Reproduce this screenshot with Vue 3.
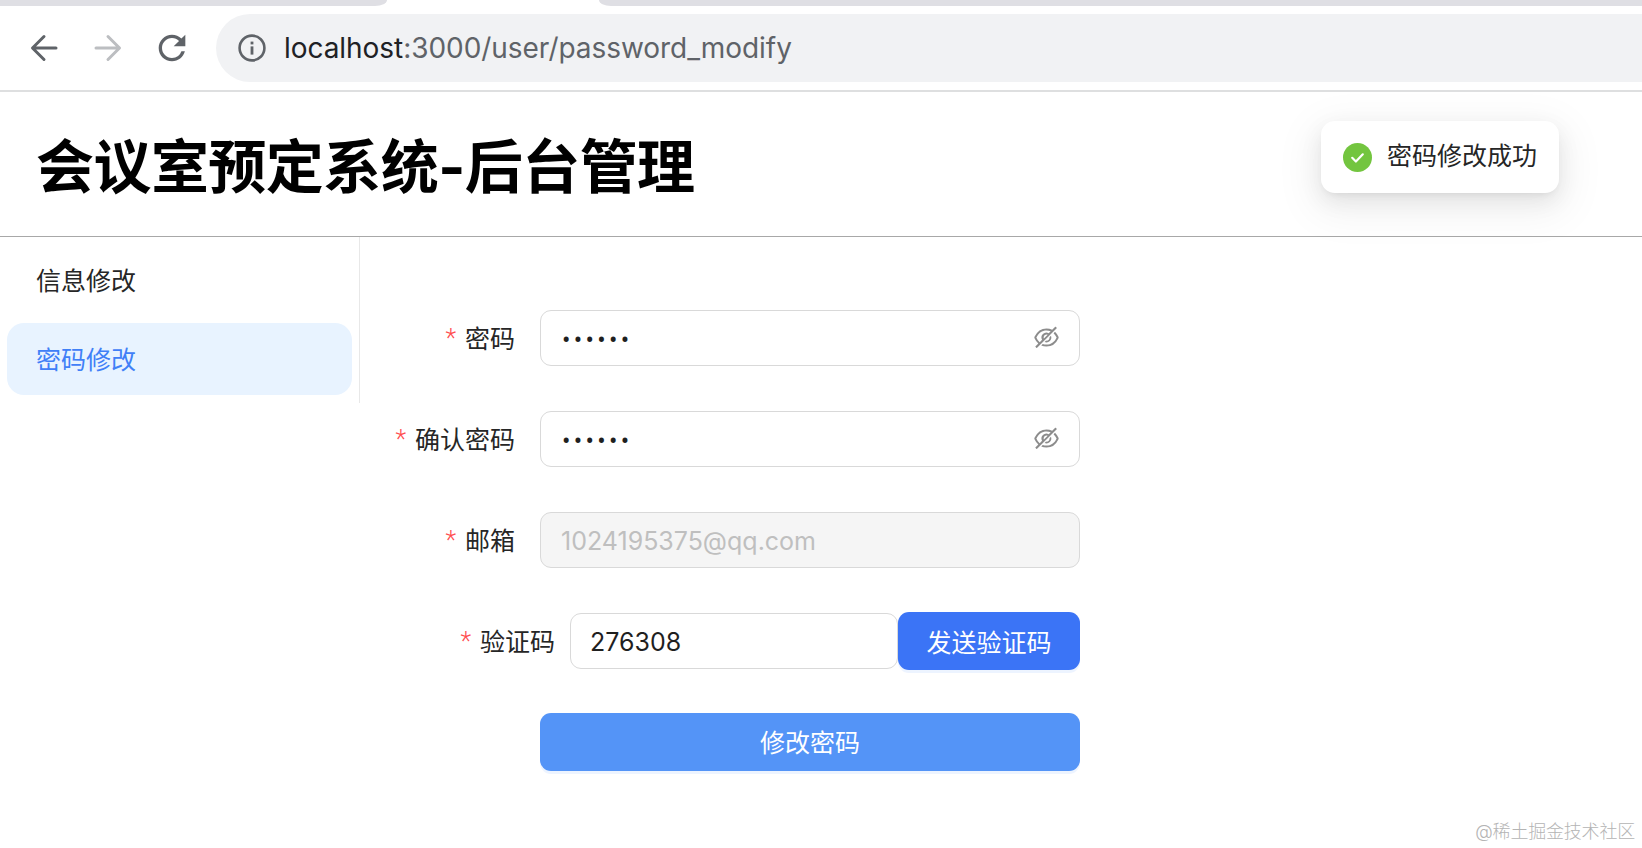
<script setup>
const rows = [
  { label: '密码', value: '123456' },
  { label: '确认密码', value: '123456' },
]
</script>

<template>
  <div class="page">
    <div class="tabstrip">
      <div class="tab-left"></div>
      <div class="tab-gap"></div>
      <div class="tab-right"></div>
    </div>

    <div class="toolbar">
      <svg class="nav-btn" width="28" height="28" viewBox="0 0 28 28" fill="none" stroke="#5f6368" stroke-width="3" stroke-linecap="round" stroke-linejoin="round">
        <path d="M26 14H3M14 2.5 2.5 14 14 25.5" />
      </svg>
      <svg class="nav-btn fwd" width="28" height="28" viewBox="0 0 28 28" fill="none" stroke="#bcbec1" stroke-width="3" stroke-linecap="round" stroke-linejoin="round">
        <path d="M2 14h23M14 2.5 25.5 14 14 25.5" />
      </svg>
      <svg class="reload" width="40" height="40" viewBox="0 0 24 24" fill="#5f6368">
        <path d="M17.65 6.35A7.958 7.958 0 0 0 12 4c-4.42 0-7.99 3.58-7.99 8s3.57 8 7.99 8c3.73 0 6.84-2.55 7.73-6h-2.08A5.99 5.99 0 0 1 12 18c-3.31 0-6-2.69-6-6s2.69-6 6-6c1.66 0 3.14.69 4.22 1.78L13 11h7V4l-2.35 2.35z" />
      </svg>
      <div class="omnibox">
        <svg width="28" height="28" viewBox="0 0 28 28" fill="none">
          <circle cx="14" cy="14" r="12.4" stroke="#5f6368" stroke-width="2.6" />
          <rect x="12.6" y="12.4" width="2.8" height="8.2" fill="#5f6368" />
          <rect x="12.6" y="7.6" width="2.8" height="2.8" fill="#5f6368" />
        </svg>
        <span class="url"><span class="host">localhost</span>:3000/user/password_modify</span>
      </div>
    </div>

    <header class="header">
      <h1 class="title">会议室预定系统-后台管理</h1>
    </header>

    <div class="toast">
      <svg width="29" height="29" viewBox="0 0 29 29">
        <circle cx="14.5" cy="14.5" r="14.5" fill="#73c53f" />
        <path d="M9.2 14.8l3.7 3.7 6.9-7.2" fill="none" stroke="#fff" stroke-width="2.2" stroke-linecap="round" stroke-linejoin="round" />
      </svg>
      <span class="toast-text">密码修改成功</span>
    </div>

    <div class="body">
      <aside class="sidebar">
        <div class="menu-item">信息修改</div>
        <div class="menu-item active">密码修改</div>
      </aside>

      <form class="form" @submit.prevent>
        <div v-for="row in rows" :key="row.label" class="row">
          <label class="label"><i>*</i>{{ row.label }}</label>
          <div class="field">
            <input class="input pw" type="password" :value="row.value" readonly />
            <svg class="eye" width="25" height="25" viewBox="64 64 896 896" fill="#8c8c8c">
              <path d="M942.2 486.2Q889.47 375.11 816.7 305l-50.88 50.88C807.31 395.53 843.45 447.4 874.7 512 791.5 684.2 673.4 766 512 766q-72.67 0-133.87-22.38L323 798.75Q408 838 512 838q288.3 0 430.2-300.3a60.29 60.29 0 0 0 0-51.5zm-63.57-320.64L836 122.88a8 8 0 0 0-11.32 0L715.31 232.2Q624.86 186 512 186q-288.3 0-430.2 300.3a60.3 60.3 0 0 0 0 51.5q56.69 119.4 136.5 191.41L112.48 835a8 8 0 0 0 0 11.31L155.17 889a8 8 0 0 0 11.31 0l712.15-712.12a8 8 0 0 0 0-11.32zM149.3 512C232.6 339.8 350.7 258 512 258c54.54 0 104.13 9.36 149.12 28.39l-70.3 70.3a176 176 0 0 0-238.13 238.13l-83.42 83.42c-46.18-39.79-85.87-91.73-120.27-165.24zm260.71 0a104 104 0 0 1 143.85-96.38L418.78 550.7A103.94 103.94 0 0 1 410 512z" />
              <path d="M508 624c-3.46 0-6.87-.16-10.25-.47l-52.82 52.82a176.09 176.09 0 0 0 227.42-227.42l-52.82 52.82c.31 3.38.47 6.79.47 10.25a111.94 111.94 0 0 1-112 112z" />
            </svg>
          </div>
        </div>

        <div class="row">
          <label class="label"><i>*</i>邮箱</label>
          <div class="field">
            <input class="input disabled" value="1024195375@qq.com" disabled />
          </div>
        </div>

        <div class="row">
          <label class="label wide"><i>*</i>验证码</label>
          <input class="input code" value="276308" readonly />
          <button class="btn send" type="button">发送验证码</button>
        </div>

        <div class="row last">
          <div class="label"></div>
          <button class="btn submit" type="submit">修改密码</button>
        </div>
      </form>
    </div>

    <div class="watermark">@稀土掘金技术社区</div>
  </div>
</template>

<style>
html, body {
  margin: 0;
  background: #fff;
  overflow: hidden;
}
</style>

<style scoped>
.page {
  position: relative;
  width: 1642px;
  height: 848px;
  overflow: hidden;
  background: #fff;
  font-family: Inter, "Noto Sans CJK SC", sans-serif;
  color: #1f1f1f;
}
.tabstrip {
  display: flex;
  height: 6px;
}
.tab-left {
  width: 387px;
  background: #dfdfe4;
  border-bottom-right-radius: 12px 6px;
}
.tab-gap {
  width: 212px;
}
.tab-right {
  flex: 1;
  background: #dfdfe4;
  border-bottom-left-radius: 12px 6px;
}
.toolbar {
  display: flex;
  align-items: center;
  height: 84px;
  border-bottom: 2px solid #dedfe0;
  padding-left: 30px;
  box-sizing: content-box;
}
.nav-btn {
  flex: none;
}
.fwd {
  margin-left: 36px;
}
.reload {
  flex: none;
  margin-left: 30px;
  margin-right: 24px;
}
.omnibox {
  flex: 1;
  height: 68px;
  margin-right: -40px;
  border-radius: 34px;
  background: #f1f2f4;
  display: flex;
  align-items: center;
  padding-left: 22px;
  gap: 18px;
}
.url {
  font-size: 28px;
  color: #5f6368;
  line-height: 34px;
  letter-spacing: -0.05px;
}
.host {
  color: #202124;
}
.header {
  height: 144px;
  display: flex;
  align-items: center;
  border-bottom: 1px solid #a8a8a8;
  padding-left: 36px;
  box-sizing: content-box;
}
.title {
  margin: 6px 0 0;
  font-size: 58px;
  line-height: 70px;
  font-weight: 700;
  color: #000;
  letter-spacing: -0.55px;
}
.toast {
  position: absolute;
  left: 1321px;
  top: 121px;
  width: 238px;
  height: 72px;
  box-sizing: border-box;
  padding-left: 22px;
  display: flex;
  align-items: center;
  gap: 15px;
  background: #fff;
  border-radius: 14px;
  font-size: 25px;
  color: #262626;
  box-shadow: 0 8px 22px 0 rgba(0, 0, 0, 0.08), 0 4px 8px -5px rgba(0, 0, 0, 0.12), 0 12px 40px 11px rgba(0, 0, 0, 0.05);
}
.toast-text {
  line-height: 32px;
  margin-bottom: 2px;
}
.body {
  display: flex;
  align-items: flex-start;
}
.sidebar {
  width: 360px;
  height: 166px;
  box-sizing: border-box;
  padding: 8px 7px 0;
  border-right: 1px solid #e8e8e8;
  display: flex;
  flex-direction: column;
  gap: 6px;
}
.menu-item {
  width: 345px;
  height: 72px;
  box-sizing: border-box;
  padding: 0 0 0 29px;
  display: flex;
  align-items: center;
  font-size: 25px;
  line-height: 32px;
  color: #262626;
  border-radius: 17px;
}
.menu-item.active {
  background: #e8f3ff;
  color: #4080f7;
  padding-top: 1px;
}
.form {
  flex: none;
  width: 720px;
  padding-top: 73px;
  margin-left: 0;
}
.row {
  display: flex;
  align-items: center;
  height: 56px;
  margin-bottom: 45px;
}
.row.last {
  margin-top: -1px;
  height: 58px;
}
.label {
  flex: none;
  width: 180px;
  box-sizing: border-box;
  padding: 2px 25px 0 0;
  text-align: right;
  font-size: 25px;
  line-height: 32px;
  color: #262626;
}
.label.wide {
  width: 210px;
  padding-right: 15px;
}
.label i {
  font-style: normal;
  font-family: Roboto, sans-serif;
  font-weight: 300;
  color: #ff4d4f;
  margin-right: 9px;
  position: relative;
  top: -1px;
}
.field {
  position: relative;
  width: 540px;
  height: 56px;
}
.input {
  display: block;
  box-sizing: border-box;
  width: 100%;
  height: 56px;
  margin: 0;
  padding: 2px 21px 0 20px;
  border: 1px solid #d9d9d9;
  border-radius: 11px;
  background: #fff;
  outline: none;
  font-family: Inter, "Noto Sans CJK SC", sans-serif;
  font-size: 25px;
  color: #1f1f1f;
}
.input.pw {
  font-family: Roboto, sans-serif;
  padding-right: 60px;
  padding-left: 21px;
  padding-top: 4px;
  letter-spacing: 3.3px;
}
.input.disabled {
  background: #f5f5f5;
  color: #bfbfbf;
  -webkit-text-fill-color: #bfbfbf;
  opacity: 1;
}
.input.code {
  flex: none;
  width: 328px;
  padding-top: 1px;
  padding-left: 19px;
}
.eye {
  position: absolute;
  right: 21px;
  top: 15px;
}
.btn {
  flex: none;
  height: 58px;
  margin: 0;
  padding: 0;
  border: none;
  border-radius: 11px;
  color: #fff;
  font-family: Inter, "Noto Sans CJK SC", sans-serif;
  font-size: 25px;
  box-shadow: 0 3px 0 rgba(5, 100, 255, 0.07);
}
.send {
  width: 182px;
  background: #3b74f6;
}
.submit {
  width: 540px;
  background: #5494f7;
  padding-bottom: 2px;
}
.watermark {
  position: absolute;
  right: 7px;
  bottom: 4px;
  font-size: 18px;
  line-height: 24px;
  letter-spacing: -0.2px;
  color: #b4b4b4;
  font-weight: 300;
}
</style>
